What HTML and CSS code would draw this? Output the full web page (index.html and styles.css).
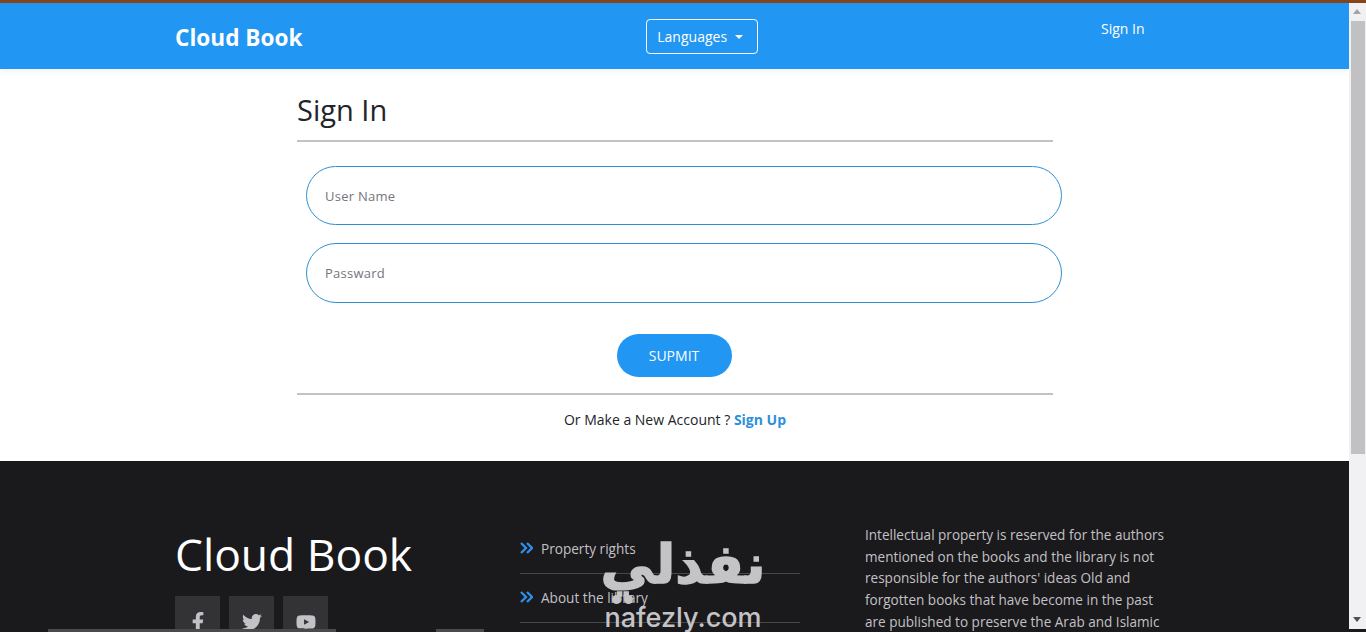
FILE: index.html
```html
<!DOCTYPE html>
<html lang="en">
<head>
  <meta charset="UTF-8" />
  <meta name="viewport" content="width=device-width, initial-scale=1.0" />
  <title>Cloud Book - Sign In</title>
  <link rel="stylesheet" href="styles.css">
</head>
<body>
  <div class="top-strip"></div>
  <div class="window">
    <div class="page">
      <header class="navbar">
        <a class="brand" href="#">Cloud Book</a>
        <button class="lang-btn" type="button">Languages <span class="caret"></span></button>
        <a class="nav-link" href="#">Sign In</a>
      </header>

      <main class="signin">
        <h1>Sign In</h1>
        <form class="signin-form">
          <input class="field" type="text" placeholder="User Name" />
          <input class="field field-tall" type="password" placeholder="Passward" />
          <button class="submit-btn" type="button">SUPMIT</button>
        </form>
        <p class="signup-line">Or Make a New Account ? <a href="#">Sign Up</a></p>
      </main>

      <footer class="footer">
        <div class="footer-brand">
          <h2>Cloud Book</h2>
          <div class="socials">
            <a class="social" href="#">
              <svg width="14" height="20" viewBox="0 0 320 512"><path fill="currentColor" d="M279 288l14-93h-89v-60c0-25 12-50 52-50h41V6s-37-6-72-6c-73 0-121 44-121 125v70H23v93h81v224h100V288z"/></svg>
            </a>
            <a class="social" href="#">
              <svg width="20" height="20" viewBox="0 0 512 512"><path fill="currentColor" d="M459 152c.3 4.500.3 9.100.3 13.600 0 138.700-105.600 298.600-298.600 298.600-59.500 0-114.700-17.200-161.100-47.100 8.400 1 16.600 1.300 25.300 1.300 49.100 0 94.200-16.600 130.300-44.800-46.100-1-84.800-31.200-98.100-72.800 6.500 1 13 1.600 19.800 1.600 9.400 0 18.800-1.300 27.600-3.600-48.100-9.700-84.100-52-84.100-103v-1.300c14 7.800 30.200 12.700 47.400 13.300-28.300-18.800-46.800-51-46.800-87.400 0-19.500 5.200-37.400 14.300-53 51.700 63.700 129.300 105.300 216.400 109.800-1.600-7.800-2.600-15.900-2.600-24 0-57.800 46.800-104.900 104.900-104.900 30.200 0 57.500 12.700 76.700 33.100 23.700-4.500 46.500-13.300 66.600-25.300-7.800 24.100-24.400 44.500-46.100 57.500 21.100-2.300 41.600-8.100 60.400-16.200-14.300 20.800-32.200 39.300-52.600 54.300z"/></svg>
            </a>
            <a class="social" href="#">
              <svg width="20" height="20" viewBox="0 0 576 512"><path fill="currentColor" d="M550 124c-6-24-25-42-48-49C459 64 288 64 288 64S117 64 74 75c-23 7-42 25-48 49-12 43-12 132-12 132s0 90 12 133c6 23 25 41 48 48 43 11 214 11 214 11s171 0 214-11c23-7 42-25 48-48 12-43 12-133 12-133s0-89-12-132zM232 338V175l143 81z"/></svg>
            </a>
          </div>
        </div>
        <ul class="footer-links">
          <li>
            <svg class="chevrons" width="13" height="12" viewBox="0 0 13 12"><path fill="none" stroke="currentColor" stroke-width="2.4" d="M1 1l5 5-5 5M7 1l5 5-5 5"/></svg>
            Property rights
          </li>
          <li>
            <svg class="chevrons" width="13" height="12" viewBox="0 0 13 12"><path fill="none" stroke="currentColor" stroke-width="2.4" d="M1 1l5 5-5 5M7 1l5 5-5 5"/></svg>
            About the library
          </li>
        </ul>
        <p class="footer-text">Intellectual property is reserved for the authors mentioned on the books and the library is not responsible for the authors' ideas Old and forgotten books that have become in the past are published to preserve the Arab and Islamic heritage</p>
      </footer>
    </div>

    <div class="scrollbar">
      <span class="arrow-up"></span>
      <span class="thumb"></span>
      <span class="arrow-down"></span>
    </div>
  </div>

  <!-- site watermark and the bits of window behind the page -->
  <div class="watermark">
    <span class="wm-ar" lang="ar" dir="rtl">نفذلي</span>
    <span class="wm-dots"><i></i><i></i></span>
    <span class="wm-en">nafezly.com</span>
  </div>
  <div class="edge edge-a"></div>
  <div class="edge edge-b"></div>
</body>
</html>
```

FILE: styles.css
```css
* {
  box-sizing: border-box;
}

html, body {
  height: 100%;
}

body {
  margin: 0;
  overflow: hidden;
  display: flex;
  flex-direction: column;
  position: relative;
  background: #1a191c;
  font-family: 'Open Sans', 'Noto Sans', sans-serif;
  color: #212529;
}

.top-strip {
  height: 3px;
  background: #86441b;
  flex: none;
}

.window {
  flex: 1;
  display: flex;
  min-height: 0;
}

.page {
  flex: 1;
  min-width: 0;
  overflow: hidden;
  background: #fff;
}

/* navbar */
.navbar {
  height: 66px;
  background: #2196f3;
  box-shadow: 0 2px 6px rgba(0, 0, 0, 0.06);
  position: relative;
  display: grid;
  grid-template-columns: 471px 112px 1fr;
  padding-left: 175px;
  align-items: start;
}

.brand {
  color: #fff;
  font-size: 22.6px;
  font-weight: 700;
  line-height: 30px;
  margin-top: 20px;
  text-decoration: none;
}

.lang-btn {
  width: 112px;
  height: 35px;
  margin-top: 16px;
  padding: 0 4px 0 0;
  background: transparent;
  border: 1px solid #fff;
  border-radius: 4px;
  color: #fff;
  font: 14px 'Open Sans', sans-serif;
}

.caret {
  display: inline-block;
  margin-left: 4px;
  vertical-align: 3px;
  border-top: 4px solid #fff;
  border-left: 4px solid transparent;
  border-right: 4px solid transparent;
}

.nav-link {
  color: #fff;
  font-size: 14px;
  line-height: 20px;
  margin-top: 16px;
  margin-left: 343px;
  text-decoration: none;
}

/* sign in */
.signin {
  height: 392px;
  width: 756px;
  margin-left: 297px;
  padding-top: 20px;
}

.signin h1 {
  margin: 0;
  height: 53px;
  font-size: 29px;
  font-weight: 400;
  line-height: 42px;
  border-bottom: 2px solid #c3c1c5;
}

.signin-form {
  width: 756px;
  padding-top: 24px;
  display: flex;
  flex-direction: column;
  align-items: flex-start;
}

.field {
  flex: none;
  width: 756px;
  height: 59px;
  margin: 0 0 18px 9px;
  padding: 0 18px;
  border: 1px solid #2f8fd3;
  border-radius: 30px;
  font: 13px 'Open Sans', sans-serif;
  letter-spacing: 0.25px;
  outline: none;
}

.field-tall {
  height: 60px;
}

.field::placeholder {
  color: #75757d;
}

.submit-btn {
  align-self: center;
  width: 115px;
  height: 43px;
  margin: 13px 2px 0 0;
  border: none;
  border-radius: 22px;
  background: #2196f3;
  color: #fff;
  font: 14px 'Open Sans', sans-serif;
}

.signup-line {
  margin: 16px 0 0;
  padding-top: 15px;
  border-top: 2px solid #c3c1c5;
  font-size: 14px;
  line-height: 20px;
  text-align: center;
}

.signup-line a {
  color: #2e8fdc;
  font-weight: 700;
  text-decoration: none;
}

/* footer */
.footer {
  background: #1a191c;
  height: 200px;
  display: grid;
  grid-template-columns: 345px 280px 370px;
  padding: 63px 0 0 175px;
  color: #c3c1c5;
}

.footer-brand h2 {
  margin: 0;
  color: #fff;
  font-size: 44.4px;
  font-weight: 400;
  line-height: 60px;
}

.socials {
  display: flex;
  gap: 9px;
  margin-top: 12px;
}

.social {
  width: 45px;
  height: 45px;
  background: #333235;
  color: #c3c1c5;
  display: flex;
  align-items: center;
  justify-content: center;
  padding-top: 6px;
}

.footer-links {
  list-style: none;
  margin: 1px 0 0;
  padding: 0;
  font-size: 13.6px;
}

.footer-links li {
  height: 49px;
  padding-top: 14px;
  line-height: 20px;
  border-bottom: 1px solid #47464a;
  display: flex;
  gap: 8px;
  align-items: flex-start;
}

.chevrons {
  color: #2e8fe6;
  margin-top: 3px;
}

.footer-text {
  margin: 1px 0 0 65px;
  font-size: 13.55px;
  line-height: 21.7px;
}

/* scrollbar */
.scrollbar {
  width: 17px;
  flex: none;
  height: 626px;
  background: #f1f0f2;
  display: flex;
  flex-direction: column;
  align-items: flex-start;
}

.arrow-up, .arrow-down {
  flex: none;
  height: 18px;
  width: 100%;
  position: relative;
}

.arrow-up::after, .arrow-down::after {
  content: "";
  position: absolute;
  left: 4px;
  border-left: 4px solid transparent;
  border-right: 4px solid transparent;
}

.arrow-up::after {
  top: 6px;
  border-bottom: 5px solid #a3a3a3;
}

.arrow-down::after {
  top: 6px;
  border-top: 5px solid #505050;
}

.thumb {
  flex: none;
  height: 433px;
  width: 14px;
  margin-left: 2px;
  background: #c1c0c2;
}

.arrow-down {
  margin-top: auto;
}

/* overlays */
.watermark {
  position: absolute;
  left: 598px;
  top: 534px;
  width: 170px;
  color: #c4c3c6;
  display: flex;
  flex-direction: column;
  align-items: center;
  pointer-events: none;
}

.wm-ar {
  font-family: 'DejaVu Sans', sans-serif;
  font-weight: 700;
  font-size: 54px;
  line-height: 62px;
  -webkit-text-stroke: 1.5px #c4c3c6;
}

.wm-dots {
  display: flex;
  gap: 3px;
  align-self: flex-start;
  margin: -1px 0 0 14px;
  height: 9px;
}

.wm-dots i {
  width: 9px;
  height: 9px;
  border-radius: 50%;
  background: #c4c3c6;
}

.wm-en {
  font-family: 'Inter', sans-serif;
  font-weight: 500;
  font-size: 27px;
  line-height: 28px;
  margin-top: 0;
}

.edge {
  position: absolute;
  bottom: 0;
  height: 3px;
  background: #4a4a4c;
}

.edge-a {
  left: 48px;
  width: 288px;
}

.edge-b {
  left: 436px;
  width: 48px;
}
```
